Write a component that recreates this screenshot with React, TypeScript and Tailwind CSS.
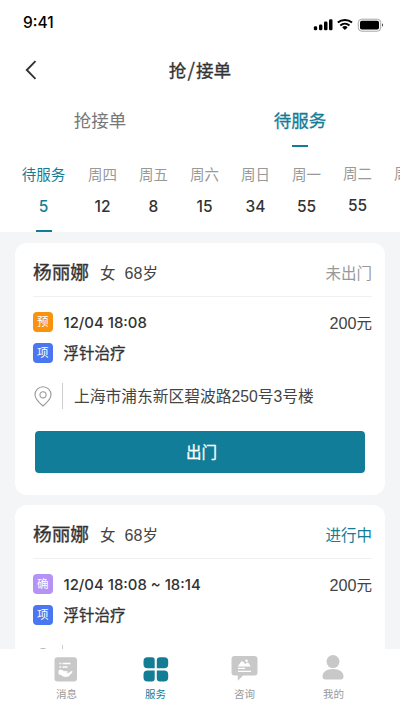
import type { ReactNode } from 'react';

const DAYS = [
  { label: '周四', count: 12 },
  { label: '周五', count: 8 },
  { label: '周六', count: 15 },
  { label: '周日', count: 34 },
  { label: '周一', count: 55 },
  { label: '周二', count: 55, raised: true },
  { label: '周三', count: 55, raised: true },
];

const ORDERS = [
  { status: '未出门', statusColor: 'text-[#999999]', badge: '预', badgeColor: 'bg-[#f8920f]', time: '12/04 18:08' },
  { status: '进行中', statusColor: 'text-[#147d96]', badge: '确', badgeColor: 'bg-[#b592f5]', time: '12/04 18:08 ~ 18:14' },
];

function StatusBar() {
  return (
    <div className="flex h-[45px] items-center justify-between pl-[23px] pr-[16px]">
      <span className="font-['Inter'] text-[15.5px] font-medium leading-[20px] text-black">9:41</span>
      <svg width="71" height="16" viewBox="0 0 71 16" className="mt-[4px]">
        <g fill="#000">
          <rect x="0.8" y="9.3" width="3.4" height="4" rx="1.4" />
          <rect x="6" y="7.4" width="3.4" height="5.9" rx="1.3" />
          <rect x="11" y="4.6" width="3.5" height="8.7" rx="1.3" />
          <rect x="16" y="2.2" width="3.5" height="11.1" rx="1.3" />
          <path d="M29.9 9.5c.9-.8 3.1-.8 4 0l.6.9-2.6 2.6-2.6-2.6z" />
          <rect x="47" y="3.8" width="19" height="8.8" rx="1.8" />
          <path d="M69.3 6.6c1.1.4 1.1 2.8 0 3.2z" />
        </g>
        <path d="M24.8 5.6c4-3.5 10.2-3.5 14.2 0M27.3 8.4c2.7-2.3 6.5-2.3 9.2 0" fill="none" stroke="#000" strokeWidth="2" />
        <rect x="45.3" y="2.2" width="22.4" height="12" rx="3.4" fill="none" stroke="#a6a6a6" />
      </svg>
    </div>
  );
}

function PinIcon() {
  return (
    <svg width="18" height="21" viewBox="0 0 18 21" fill="none" stroke="#999" strokeWidth="1.1">
      <path d="M9 20C6 17.3 1 13.6 1 8.8a8 8 0 0 1 16 0C17 13.6 12 17.3 9 20z" strokeLinejoin="round" />
      <circle cx="9" cy="8.8" r="3.1" />
    </svg>
  );
}

function Badge({ text, color }: { text: string; color: string }) {
  return (
    <span className={`mr-[11px] flex size-[19.5px] items-center justify-center rounded-[4px] pt-[2px] text-[11.5px] leading-none text-white ${color}`}>
      {text}
    </span>
  );
}

function OrderCard({ order }: { order: (typeof ORDERS)[number] }) {
  return (
    <section className="h-[252px] shrink-0 rounded-[12px] bg-white pl-[18px] pr-[13px]">
      <div className="flex h-[54px] items-center border-b border-[#eef0f2] pt-[8px]">
        <span className="text-[18.7px] text-[#333] [-webkit-text-stroke:0.35px]">杨丽娜</span>
        <span className="ml-[11px] text-[15.5px] text-[#444]">女</span>
        <span className="ml-[9px] text-[15.5px] text-[#444]">
          <span className="text-[16px]">68</span>岁
        </span>
        <span className={`ml-auto text-[15.5px] ${order.statusColor}`}>{order.status}</span>
      </div>
      <div className="mt-[15px] flex h-[20px] items-center">
        <Badge text={order.badge} color={order.badgeColor} />
        <span className="pt-[2px] font-['Inter','Noto_Sans_CJK_SC',sans-serif] text-[14.9px] font-medium text-[#333]">{order.time}</span>
        <span className="ml-auto pt-[2px] text-[15.5px] text-[#444]">
          <span className="text-[16.2px]">200</span>元
        </span>
      </div>
      <div className="mt-[11px] flex h-[20px] items-center">
        <Badge text="项" color="bg-[#4a76f2]" />
        <span className="pt-[2px] text-[15.5px] text-[#333] [-webkit-text-stroke:0.3px]">浮针治疗</span>
      </div>
      <div className="mt-[19px] flex h-[28px] items-center pl-px">
        <PinIcon />
        <span className="ml-[10px] h-[26px] w-px bg-[#ccc]" />
        <span className="ml-[11px] whitespace-nowrap pt-[2px] text-[15.75px] text-[#444]">上海市浦东新区碧波路250号3号楼</span>
      </div>
      <button className="ml-[2px] mt-[21px] block h-[42px] w-[330px] rounded-[4px] bg-[#127d98] pl-[3px] pt-[2px] text-[15.5px] text-white [-webkit-text-stroke:0.3px]">
        出门
      </button>
    </section>
  );
}

function NavItem({ label, active, children }: { label: string; active?: boolean; children: ReactNode }) {
  return (
    <div className={`flex w-[89px] flex-col items-center ${active ? 'text-[#147d96]' : 'text-[#999]'}`}>
      <svg width="28" height="28" viewBox="0 0 28 28" className={active ? 'fill-[#147d96]' : 'fill-[#c8c8c8]'}>
        {children}
      </svg>
      <span className="mt-[4px] text-[10.5px] leading-[14px]">{label}</span>
    </div>
  );
}

export default function App() {
  return (
    <div className="flex h-[711px] w-[400px] flex-col overflow-hidden bg-[#f3f5f7] font-['Liberation_Sans','Noto_Sans_CJK_SC',sans-serif]">
      <header className="h-[232px] shrink-0 overflow-hidden bg-white">
        <StatusBar />
        <div className="grid h-[50px] grid-cols-[60px_1fr_60px] items-center">
          <svg width="12" height="20" viewBox="0 0 12 20" className="ml-[25px]" fill="none" stroke="#333" strokeWidth="1.9">
            <path d="M10.5 1.2 1.8 10l8.7 8.8" />
          </svg>
          <h1 className="pt-[3px] text-center text-[17.6px] text-[#333] [-webkit-text-stroke:0.3px]">
            抢<span className="mx-[1px] font-['Noto_Sans_CJK_SC'] text-[19px] leading-none">/</span>接单
          </h1>
        </div>
        <div className="grid h-[64px] grid-cols-2 text-center text-[17.5px] leading-[26px]">
          <div className="pt-[13px] text-[#777]">抢接单</div>
          <div className="flex flex-col items-center pt-[13px] text-[#147d96]">
            <span className="[-webkit-text-stroke:0.3px]">待服务</span>
            <span className="mt-[11px] h-[2px] w-[16px] bg-[#147d96]" />
          </div>
        </div>
        <div className="flex w-[440px] text-center">
          <div className="ml-[10px] flex w-[67px] shrink-0 flex-col items-center text-[#147d96]">
            <span className="mt-[5px] text-[14.5px] leading-[22px]">待服务</span>
            <span className="mt-[11px] font-['Inter'] text-[15.5px] font-medium leading-[20px]">5</span>
            <span className="mt-[13px] h-[2px] w-[16px] bg-[#147d96]" />
          </div>
          {DAYS.map((day) => (
            <div key={day.label} className={`flex w-[51px] shrink-0 flex-col items-center ${day.raised ? 'pt-[4px]' : 'pt-[5px]'}`}>
              <span className="text-[14.5px] leading-[22px] text-[#999]">{day.label}</span>
              <span className="mt-[11px] font-['Inter'] text-[15.5px] font-medium leading-[20px] text-[#333]">{day.count}</span>
            </div>
          ))}
        </div>
      </header>

      <main className="flex min-h-0 flex-1 flex-col gap-[10px] overflow-hidden px-[15px] pt-[11px]">
        {ORDERS.map((order) => (
          <OrderCard key={order.status} order={order} />
        ))}
      </main>

      <nav className="flex h-[62px] shrink-0 bg-white pl-[22px] pt-[6px]">
        <NavItem label="消息">
          <rect x="1.5" y="2.2" width="22.5" height="24.3" rx="3" />
          <g fill="none" stroke="#fff" strokeWidth="1.5">
            <path d="M6.5 8.4h1.7M9.5 8.4h8M6.5 12h1.7M9.5 12h5" />
          </g>
          <path d="M5.6 15.2c2-.9 3.6-.4 5.1.9l3.4.2c.9.2.8 1.3 0 1.5l-2 .2 3 .2 3-2c1-.5 1.8.4 1.1 1.2l-3.7 4c-2.8 1-5.4.5-7.7-1.5l-2.2-.7z" fill="#fff" />
        </NavItem>
        <NavItem label="服务" active>
          <path d="M5.5 2.2H10a2.7 2.7 0 0 1 2.7 2.7v8.4H5.5a4 4 0 0 1-4-4V6.2a4 4 0 0 1 4-4zM18 2.2h4.2a4 4 0 0 1 4 4v3.1a4 4 0 0 1-4 4H14.8V5.4A3.2 3.2 0 0 1 18 2.2zM5.5 15.4h7.2v8.2a2.9 2.9 0 0 1-2.9 2.9H5.5a4 4 0 0 1-4-4v-3.1a4 4 0 0 1 4-4zM14.8 15.4h7.4a4 4 0 0 1 4 4v3.1a4 4 0 0 1-4 4H18a3.2 3.2 0 0 1-3.2-3.2z" />
        </NavItem>
        <NavItem label="咨询">
          <path d="M3.5 1h20a3 3 0 0 1 3 3v13.6a3 3 0 0 1-3 3H12L6.8 25.8v-5.2H3.5a3 3 0 0 1-3-3V4a3 3 0 0 1 3-3z" />
          <path d="M6.8 11.5 10 6.8c.7-.9 1.7-.9 2.3 0l2 2.4 1.4-1.4c.7-.6 1.4-.5 1.9.2l2.2 3.5z" fill="#fff" />
          <circle cx="15.5" cy="5.8" r="1.3" fill="#fff" />
          <path d="M7 13.4h7M7 16.4h13" stroke="#fff" strokeWidth="1.1" />
        </NavItem>
        <NavItem label="我的">
          <circle cx="13" cy="6.6" r="6.5" />
          <path d="M2.5 21.6C2.5 17 6.5 14 13 14s10.5 3 10.5 7.6c0 2-1 3-3 3h-15c-2 0-3-1-3-3z" />
        </NavItem>
      </nav>
    </div>
  );
}
